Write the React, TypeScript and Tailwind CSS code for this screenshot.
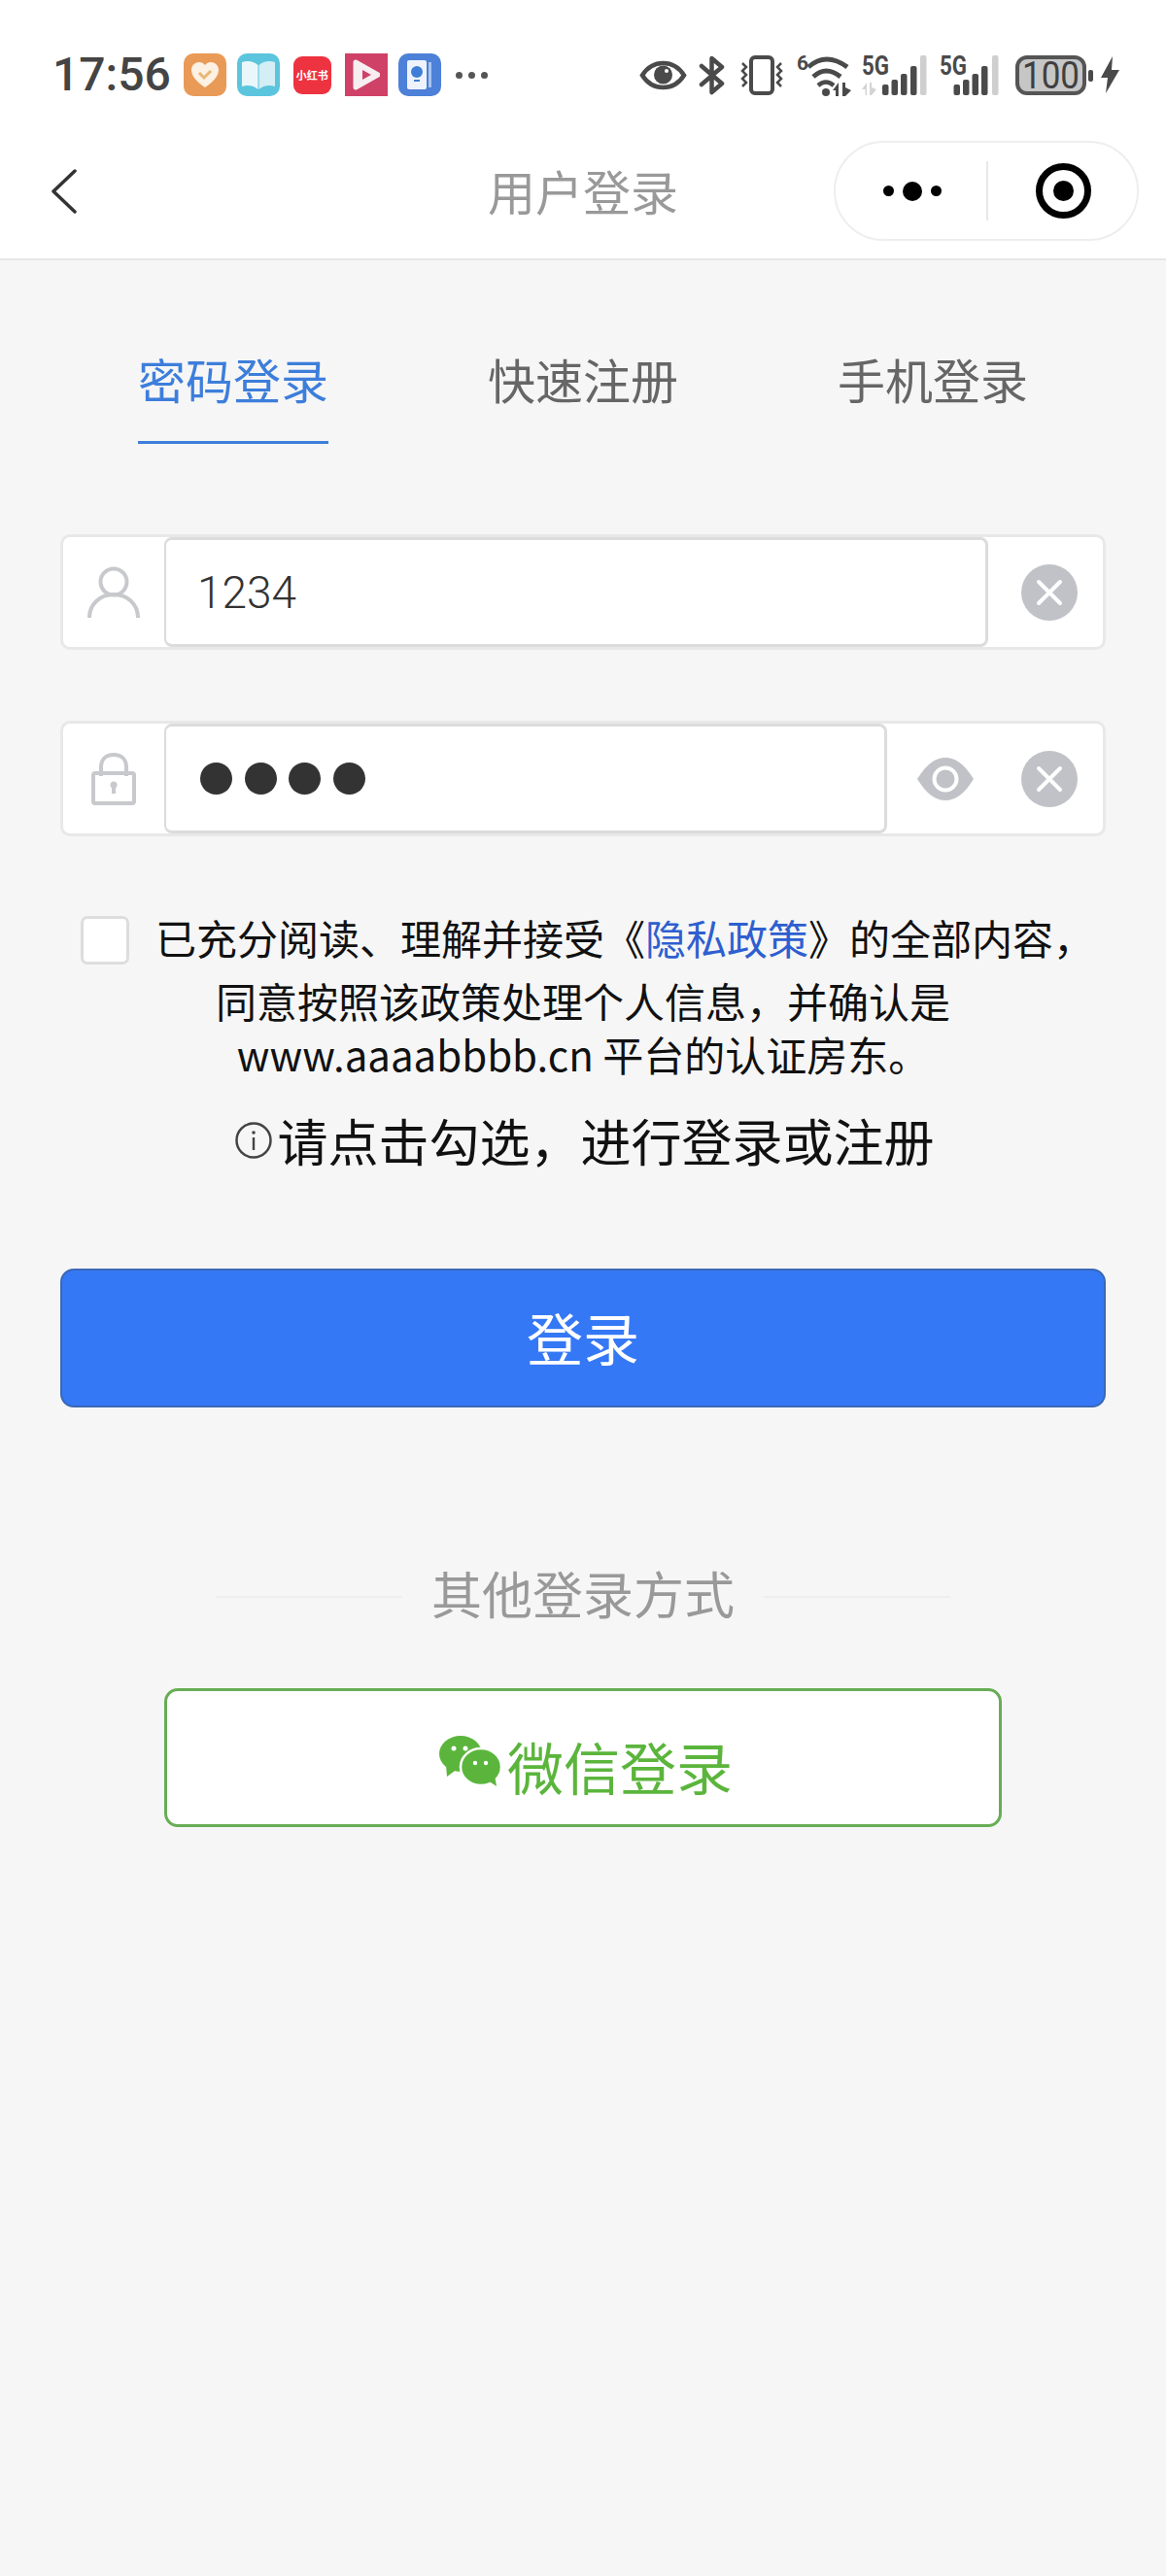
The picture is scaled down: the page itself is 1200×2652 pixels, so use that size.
import React from 'react';

const cjk = { fontFamily: '"Noto Sans CJK SC", "Noto Sans", sans-serif' };

function SignalBars({ xs, arrows }: { xs: number[]; arrows?: boolean }) {
  const heights = [11, 16, 22, 30, 41];
  const width = xs[4] + 7;
  return (
    <svg width={width} height={41} viewBox={`0 0 ${width} 41`} className="shrink-0 overflow-visible">
      <text x={0} y={20} fontSize={28} fontWeight={700} fill="#4a4a4a" fontFamily="Roboto" textLength={28} lengthAdjust="spacingAndGlyphs">5G</text>
      {xs.map((x, i) => (
        <rect key={x} x={x} y={41 - heights[i]} width={6.5} height={heights[i]} rx={2} fill={i === 4 ? '#cfcfcf' : '#4a4a4a'} />
      ))}
      {arrows && (
        <g fill="#d4d4d4">
          <path d="M0 35 L5 28 V41 H3.5 V35 Z" />
          <path d="M8 28 H10 V33 L15 35 L10 41 H8 Z" />
        </g>
      )}
    </svg>
  );
}

function StatusBar() {
  return (
    <div className="flex h-[130px] pt-[24px] pl-[54px] pr-[48px] items-center justify-between">
      <div className="flex items-center">
        <span className="text-[48px] leading-none font-medium text-[#444]" style={{ fontFamily: 'Roboto, sans-serif' }}>17:56</span>
        <div className="ml-[13px] flex items-center">
          <div className="w-[44px] h-[44px] rounded-[10px] bg-[#e99a56] flex items-center justify-center">
            <svg width="30" height="28" viewBox="0 0 30 28">
              <path d="M15 27C6 21 1 15 1 9C1 4 5 1 9 1C11.500 1 13.500 2 15 4C16.500 2 18.500 1 21 1C25 1 29 4 29 9C29 15 24 21 15 27Z" fill="#fcf1e2" />
              <path d="M9 12L14 17L21 10" stroke="#e8b676" strokeWidth="3" fill="none" />
            </svg>
          </div>
          <div className="ml-[11px] w-[44px] h-[44px] rounded-[10px] bg-[#5cc5de] flex items-center justify-center">
            <svg width="36" height="32" viewBox="0 0 36 32">
              <path d="M1 3C7 1 13 2 17.500 6V31C13 27 7 26 1 28Z" fill="#eaf7fa" />
              <path d="M35 3C29 1 23 2 18.500 6V31C23 27 29 26 35 28Z" fill="#d3eef5" />
            </svg>
          </div>
          <div className="ml-[14px] w-[39px] h-[39px] rounded-[9px] bg-[#ee3340] flex items-center justify-center overflow-hidden">
            <span className="text-[11px] leading-none font-bold text-white whitespace-nowrap" style={cjk}>小红书</span>
          </div>
          <div className="ml-[14px] w-[44px] h-[44px] bg-[#cf4167] flex items-center justify-center">
            <svg width="28" height="32" viewBox="0 0 28 32">
              <path d="M3 3L26 16L3 29Z" fill="#f7eef1" stroke="#f7eef1" strokeWidth="5" strokeLinejoin="round" />
              <path d="M10 11L19 16L10 21Z" fill="#cf4167" />
            </svg>
          </div>
          <div className="ml-[11px] w-[44px] h-[44px] rounded-[10px] bg-[#4d80d8] flex items-center justify-center">
            <svg width="30" height="36" viewBox="0 0 30 36">
              <rect x="2" y="3" width="20" height="30" rx="2" fill="#eef3fb" />
              <rect x="24" y="5" width="3" height="26" fill="#a9c4ee" />
              <circle cx="12" cy="15" r="6" fill="#3f7ed8" />
              <rect x="9" y="23" width="6" height="2" fill="#3f7ed8" />
            </svg>
          </div>
          <div className="ml-[15px] flex gap-[6px]">
            <span className="w-[7px] h-[7px] rounded-full bg-[#555]" />
            <span className="w-[7px] h-[7px] rounded-full bg-[#555]" />
            <span className="w-[7px] h-[7px] rounded-full bg-[#555]" />
          </div>
        </div>
      </div>

      <div className="flex items-center">
        <svg width="49" height="31" viewBox="0 0 49 31" className="shrink-0">
          <path d="M3 15.500C9 6 16 3 24.500 3S40 6 46 15.500C40 25 33 28 24.500 28S9 25 3 15.500Z" fill="none" stroke="#4a4a4a" strokeWidth="4.500" />
          <circle cx="24.500" cy="15" r="9.500" fill="#4a4a4a" />
          <circle cx="28" cy="11" r="2" fill="#fff" />
        </svg>
        <svg width="27" height="41" viewBox="0 0 27 41" className="ml-[12px] shrink-0">
          <path d="M3 11L24 29L13.500 38V3L24 12L3 30" fill="none" stroke="#4a4a4a" strokeWidth="4.500" strokeLinejoin="round" strokeLinecap="round" />
        </svg>
        <svg width="46" height="41" viewBox="0 0 46 41" className="ml-[15px] shrink-0">
          <rect x="12" y="2" width="22" height="37" rx="4" fill="none" stroke="#4a4a4a" strokeWidth="4" />
          <path d="M3 8L7 12L3 16L7 20L3 24L7 28L3 32" fill="none" stroke="#4a4a4a" strokeWidth="2.500" />
          <path d="M43 8L39 12L43 16L39 20L43 24L39 28L43 32" fill="none" stroke="#4a4a4a" strokeWidth="2.500" />
        </svg>
        <svg width="56" height="43" viewBox="0 0 56 43" className="ml-[13px] shrink-0 overflow-visible">
          <text x={0} y={16} fontSize={21} fontWeight={700} fill="#4a4a4a" fontFamily="Roboto">6</text>
          <path d="M12 13Q30 -3 52 13" fill="none" stroke="#4a4a4a" strokeWidth="5" />
          <path d="M17 23Q30 11 45 23" fill="none" stroke="#4a4a4a" strokeWidth="5" />
          <path d="M22 32Q30 25 38 32" fill="none" stroke="#4a4a4a" strokeWidth="4.500" />
          <circle cx="30" cy="39" r="4" fill="#4a4a4a" />
          <path d="M37 37L43 29V43H40V37Z" fill="#4a4a4a" />
          <path d="M47 29H50V34L56 37L50 43H47Z" fill="#4a4a4a" />
        </svg>
        <div className="ml-[11px]">
          <SignalBars xs={[21, 30.500, 40, 50, 60]} arrows />
        </div>
        <div className="ml-[13px]">
          <SignalBars xs={[14.500, 24, 33.500, 43, 54]} />
        </div>
        <svg width="80" height="41" viewBox="0 0 80 41" className="ml-[17px] shrink-0 overflow-visible">
          <rect x="2" y="2" width="69" height="37" rx="10" fill="#c6c6c6" stroke="#555" strokeWidth="4" />
          <text x={7} y={34} fontSize={39} fill="#3f3f3f" fontFamily="Roboto" textLength={59} lengthAdjust="spacingAndGlyphs">100</text>
          <rect x="75" y="15" width="5" height="12" rx="2" fill="#4a4a4a" />
        </svg>
        <svg width="19" height="38" viewBox="0 0 19 38" className="ml-[8px] shrink-0">
          <path d="M12 0L0 22H7L5 38L19 14H11Z" fill="#4a4a4a" />
        </svg>
      </div>
    </div>
  );
}

function NavBar() {
  return (
    <div className="grid grid-cols-[1fr_auto_1fr] items-center h-[138px] pb-[21px] pt-[15px] px-[28px] border-b-2 border-[#e6e6e6]">
      <svg width="28" height="46" viewBox="0 0 28 46" className="ml-[24px]">
        <path d="M25 2L3 23L25 44" fill="none" stroke="#333" strokeWidth="3.500" strokeLinecap="round" strokeLinejoin="round" />
      </svg>
      <span className="text-[49px] leading-none text-[#999] -mt-[3px] whitespace-nowrap" style={cjk}>用户登录</span>
      <div className="justify-self-end flex items-center w-[314px] h-[103px] rounded-full border-2 border-[#eeeeee]">
        <div className="flex items-center w-[155px] justify-center gap-[9px] pl-[2px]">
          <span className="w-[11px] h-[11px] rounded-full bg-black" />
          <span className="w-[20px] h-[20px] rounded-full bg-black" />
          <span className="w-[11px] h-[11px] rounded-full bg-black" />
        </div>
        <div className="w-[2px] h-[61px] bg-[#e8e8e8]" />
        <div className="flex-1 flex justify-center pl-[2px]">
          <div className="w-[57px] h-[57px] rounded-full border-[7px] border-black flex items-center justify-center">
            <span className="w-[21px] h-[21px] rounded-full bg-black" />
          </div>
        </div>
      </div>
    </div>
  );
}

function Tabs() {
  const tabs = ['密码登录', '快速注册', '手机登录'];
  return (
    <div className="grid grid-cols-3 mx-[60px] mt-[90px]">
      {tabs.map((tab, i) => (
        <div key={tab} className="flex justify-center">
          <div
            className={
              i === 0
                ? 'w-[196px] h-[99px] text-center whitespace-nowrap text-[49px] leading-[64px] text-[#3d7edb] border-b-[3px] border-[#3d7edb]'
                : 'w-[196px] h-[99px] text-center whitespace-nowrap text-[49px] leading-[64px] text-[#666]'
            }
            style={cjk}
          >
            {tab}
          </div>
        </div>
      ))}
    </div>
  );
}

function ClearIcon() {
  return (
    <div className="w-[58px] h-[58px] rounded-full bg-[#c0c2c7] flex items-center justify-center shrink-0">
      <svg width="28" height="28" viewBox="0 0 28 28">
        <path d="M3 3L25 25M25 3L3 25" stroke="#fff" strokeWidth="4" strokeLinecap="round" />
      </svg>
    </div>
  );
}

function Field({ icon, width, trailing, children }: { icon: React.ReactNode; width: string; trailing: React.ReactNode; children: React.ReactNode }) {
  return (
    <div className="flex h-[119px] mx-[62px] rounded-[10px] border-[3px] border-[#e8e8e8] bg-white">
      <div className="w-[104px] flex items-center justify-center shrink-0">{icon}</div>
      <div className={`${width} flex items-center pl-[32px] rounded-[8px] border-[3px] border-l-2 border-[#dcdcdc] bg-white`}>
        {children}
      </div>
      <div className="flex-1 flex items-center justify-end pr-[26px]">{trailing}</div>
    </div>
  );
}

function Agreement() {
  return (
    <div className="text-[42px] text-[#111]" style={cjk}>
      <div className="flex items-center h-[59px] mt-[77px] pl-[83px]">
        <div className="w-[50px] h-[50px] rounded-[7px] border-[3px] border-[#dddddd] bg-white shrink-0" />
        <div className="ml-[27px] leading-[55px] -mt-[6px] whitespace-nowrap">
          已充分阅读、理解并接受《<span className="text-[#2e5fd0]">隐私政策</span>》的全部内容，
        </div>
      </div>
      <div className="h-[55px] mt-[5px] leading-[55px] text-center">同意按照该政策处理个人信息，并确认是</div>
      <div className="h-[55px] leading-[55px] text-center">www.aaaabbbb.cn 平台的认证房东。</div>
      <div className="flex items-center justify-center h-[62px] mt-[31px] pl-[4px]">
        <svg width="38" height="38" viewBox="0 0 38 38" className="shrink-0">
          <circle cx="19" cy="19" r="17.500" fill="none" stroke="#444" strokeWidth="2.500" />
          <rect x="17.800" y="16" width="2.400" height="13" fill="#444" />
          <circle cx="19" cy="11" r="1.800" fill="#444" />
        </svg>
        <span className="ml-[5px] text-[52px] leading-[62px] whitespace-nowrap">请点击勾选，进行登录或注册</span>
      </div>
    </div>
  );
}

export default function App() {
  return (
    <div className="min-h-[2652px] w-[1200px] bg-[#f6f6f6]">
      <div className="bg-white">
        <StatusBar />
        <NavBar />
      </div>

      <Tabs />

      <div className="mt-[93px]">
        <Field
          width="w-[848px]"
          icon={
            <svg width="54" height="54" viewBox="0 0 54 54">
              <circle cx="27" cy="16" r="13.500" fill="none" stroke="#c8c9cc" strokeWidth="4" />
              <path d="M2 53C2 39 13 29 27 29S52 39 52 53" fill="none" stroke="#c8c9cc" strokeWidth="4" />
            </svg>
          }
          trailing={<ClearIcon />}
        >
          <span className="text-[46px] leading-none font-light text-[#333]" style={{ fontFamily: 'Roboto, sans-serif' }}>1234</span>
        </Field>
      </div>

      <div className="mt-[73px]">
        <Field
          width="w-[744px]"
          icon={
            <svg width="46" height="54" viewBox="0 0 46 54">
              <path d="M10 24V15C10 7 15 2 23 2S36 7 36 15V24" fill="none" stroke="#c8c9cc" strokeWidth="4" />
              <rect x="2" y="21" width="42" height="31" rx="2" fill="none" stroke="#c8c9cc" strokeWidth="4" />
              <circle cx="23" cy="33" r="3.500" fill="#c8c9cc" />
              <rect x="21" y="34" width="4" height="8" fill="#c8c9cc" />
            </svg>
          }
          trailing={
            <div className="flex items-center">
              <svg width="58" height="44" viewBox="0 0 58 44" className="shrink-0">
                <path d="M0 22C10 6 19 0 29 0S48 6 58 22C48 38 39 44 29 44S10 38 0 22Z" fill="#c0c2c7" />
                <circle cx="29" cy="22" r="11.500" fill="#c0c2c7" stroke="#fff" strokeWidth="4" />
              </svg>
              <div className="ml-[49px]">
                <ClearIcon />
              </div>
            </div>
          }
        >
          <div className="flex gap-[12.500px] ml-[3px]">
            <span className="w-[33px] h-[33px] rounded-full bg-[#333]" />
            <span className="w-[33px] h-[33px] rounded-full bg-[#333]" />
            <span className="w-[33px] h-[33px] rounded-full bg-[#333]" />
            <span className="w-[33px] h-[33px] rounded-full bg-[#333]" />
          </div>
        </Field>
      </div>

      <Agreement />

      <button className="block w-[1076px] h-[143px] mx-[62px] mt-[101px] pb-[4px] rounded-[14px] bg-[#3578f5] border-2 border-[#3a68b5] text-white text-[58px] leading-none" style={cjk}>
        登录
      </button>

      <div className="flex items-center justify-center h-[64px] mt-[159px]">
        <div className="w-[192px] h-[2px] mt-[8px] bg-[#eeeeee]" />
        <span className="mx-[30px] text-[52px] leading-none text-[#999]" style={cjk}>其他登录方式</span>
        <div className="w-[192px] h-[2px] mt-[8px] bg-[#eeeeee]" />
      </div>

      <div className="flex items-center justify-center w-[862px] h-[143px] mx-auto mt-[66px] rounded-[14px] border-[3px] border-[#67ad55] bg-white pl-[6px]">
        <svg width="62" height="52" viewBox="0 0 62 52" className="shrink-0 mt-[6px] overflow-visible">
          <ellipse cx="22" cy="18.500" rx="22" ry="18.500" fill="#5bb53c" />
          <path d="M7 30L8 42L19 34Z" fill="#5bb53c" />
          <ellipse cx="43" cy="32" rx="21" ry="19" fill="#5bb53c" stroke="#fff" strokeWidth="2.500" />
          <path d="M50 46L59 52L57 40Z" fill="#5bb53c" />
          <circle cx="15" cy="13" r="2.500" fill="#fff" />
          <circle cx="27" cy="13" r="2.500" fill="#fff" />
          <circle cx="37" cy="28" r="2.200" fill="#fff" />
          <circle cx="48" cy="28" r="2.200" fill="#fff" />
        </svg>
        <span className="ml-[8px] mt-[16px] text-[58px] leading-none text-[#5bb53c]" style={cjk}>微信登录</span>
      </div>
    </div>
  );
}
